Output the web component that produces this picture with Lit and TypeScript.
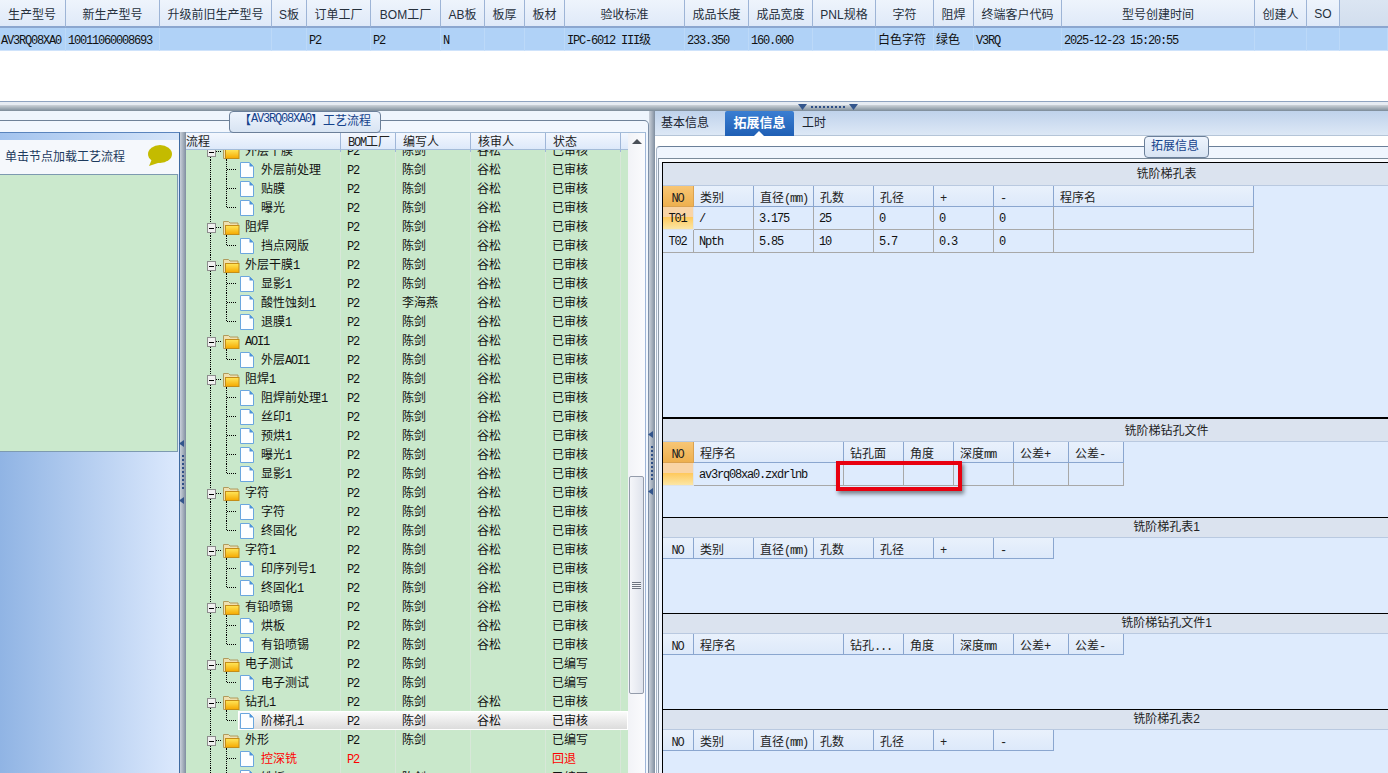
import { LitElement, html, css, svg } from "lit";
import { customElement } from "lit/decorators.js";

const mono = (s: string) =>
  s.split(/([\x20-\x7e]+)/).map((p, i) => (i % 2 ? html`<span class="m">${p}</span>` : p));

const topCols = [67, 94, 112, 35, 64, 70, 44, 40, 40, 120, 64, 64, 63, 58, 40, 88, 193, 52, 33];
const topHead = ["生产型号", "新生产型号", "升级前旧生产型号", "S板", "订单工厂", "BOM工厂", "AB板", "板厚", "板材", "验收标准", "成品长度", "成品宽度", "PNL规格", "字符", "阻焊", "终端客户代码", "型号创建时间", "创建人", "SO"];
const topRow = ["AV3RQ08XA0", "10011060008693", "", "", "P2", "P2", "N", "", "", "IPC-6012 III级", "233.350", "160.000", "", "白色字符", "绿色", "V3RQ", "2025-12-23 15:20:55", "", ""];

type Row = { n: string; f?: boolean; last?: boolean; who?: string; rev?: string; st?: string; fac?: string; red?: boolean; sel?: boolean };
const rows: Row[] = [
  { n: "外层干膜", f: true },
  { n: "外层前处理" }, { n: "贴膜" }, { n: "曝光", last: true },
  { n: "阻焊", f: true }, { n: "挡点网版", last: true },
  { n: "外层干膜1", f: true }, { n: "显影1" }, { n: "酸性蚀刻1", who: "李海燕" }, { n: "退膜1", last: true },
  { n: "AOI1", f: true }, { n: "外层AOI1", last: true },
  { n: "阻焊1", f: true }, { n: "阻焊前处理1" }, { n: "丝印1" }, { n: "预烘1" }, { n: "曝光1" }, { n: "显影1", last: true },
  { n: "字符", f: true }, { n: "字符" }, { n: "终固化", last: true },
  { n: "字符1", f: true }, { n: "印序列号1" }, { n: "终固化1", last: true },
  { n: "有铅喷锡", f: true }, { n: "烘板" }, { n: "有铅喷锡", last: true },
  { n: "电子测试", f: true, rev: "", st: "已编写" }, { n: "电子测试", last: true, rev: "", st: "已编写" },
  { n: "钻孔1", f: true }, { n: "阶梯孔1", last: true, sel: true },
  { n: "外形", f: true, rev: "", st: "已编写" },
  { n: "控深铣", red: true, who: "", rev: "", st: "回退" },
  { n: "铣板", fac: "", rev: "", st: "已编写" },
];

const holeCols = [31, 60, 60, 60, 60, 60, 60];
const holeHead = ["NO", "类别", "直径(mm)", "孔数", "孔径", "+", "-"];
const fileCols = [31, 150, 60, 50, 60, 55, 55];
type Sec = { title: string; h: number; band: number; lh: number; thick?: boolean; cols: number[]; head: string[]; rows?: string[][]; hot?: boolean; mark?: boolean };
const secs: Sec[] = [
  { title: "铣阶梯孔表", h: 255, band: 23, lh: 23, cols: [...holeCols, 200], head: [...holeHead, "程序名"], hot: true,
    rows: [["T01", "/", "3.175", "25", "0", "0", "0", ""], ["T02", "Npth", "5.85", "10", "5.7", "0.3", "0", ""]] },
  { title: "铣阶梯钻孔文件", h: 100, band: 23, lh: 25, thick: true, cols: fileCols, head: ["NO", "程序名", "钻孔面", "角度", "深度mm", "公差+", "公差-"], hot: true, mark: true,
    rows: [["", "av3rq08xa0.zxdrlnb", "", "", "", "", ""]] },
  { title: "铣阶梯孔表1", h: 96, band: 20, lh: 19, cols: holeCols, head: holeHead },
  { title: "铣阶梯钻孔文件1", h: 96, band: 20, lh: 19, cols: fileCols, head: ["NO", "程序名", "钻孔...", "角度", "深度mm", "公差+", "公差-"] },
  { title: "铣阶梯孔表2", h: 70, band: 20, lh: 19, cols: holeCols, head: holeHead },
];

const tri = (dir: string) => svg`<svg class="tri" width="9" height="7" viewBox="0 0 9 7"><path d="${dir}" fill="#33558c"/></svg>`;

@customElement("app-root")
export class AppRoot extends LitElement {
  static styles = css`
    :host { display: block; width: 1388px; height: 773px; overflow: hidden; background: #fff; font: 12px "Liberation Sans", "Noto Sans CJK SC", sans-serif; color: #111; }
    * { box-sizing: border-box; }
    .m { font-family: "Liberation Mono", monospace; font-size: 12px; letter-spacing: -1.2px; }
    .top { height: 101px; }
    .grid { display: grid; margin-left: -1px; width: 1389px; }
    .th { height: 28px; display: flex; align-items: center; justify-content: center; background: linear-gradient(#eef4fc, #dfe9f8); border-right: 1px solid #9db4d6; border-bottom: 2px solid #8ba6cf; color: #26303c; padding-top: 1px; white-space: nowrap; }
    .th.fill { background: linear-gradient(#dbe5f2, #d2deee); border-right: 0; }
    .td { height: 23px; line-height: 24px; padding-left: 2px; background: #b0d2f7; border-right: 1px solid #bcd9f8; border-bottom: 1px solid #cfe3fb; white-space: nowrap; overflow: hidden; }
    .td:first-of-type { padding-left: 1px; }
    .hsplit { position: relative; height: 10px; border-top: 1px solid #8fa3c0; background: linear-gradient(#e6ebf2 0 3px, #cdd3d9 3px, #7c8b99 100%); }
    .hgrip { position: absolute; left: 798px; top: 2px; width: 60px; height: 6px; display: flex; justify-content: space-between; align-items: center; }
    .dots-h { width: 34px; height: 2px; background: repeating-linear-gradient(90deg, #2f4f86 0 2px, transparent 2px 4px); }
    .main { display: flex; height: 662px; }
    .lgroup { position: relative; width: 649px; padding-top: 9px; background: #eef5fd; flex: none; }
    .lframe { display: flex; height: 653px; padding-top: 11px; border-top: 1px solid #6f8299; border-right: 1px solid #7e90a8; border-top-right-radius: 5px; background: #f2f7fe; }
    .legend { position: absolute; display: flex; align-items: center; justify-content: center; height: 22px; border: 1px solid #6b7f99; border-radius: 4px; background: linear-gradient(#eef4fd, #d8e4f3); color: #15428b; white-space: nowrap; }
    .l1 { left: 229px; top: 0; width: 152px; padding-bottom: 6px; }
    .l2 { left: 489px; top: 25px; width: 65px; padding: 0 3px 5px 0; }
    .lpane { width: 180px; flex: none; border-top: 1px solid #5a84bd; border-right: 1px solid #3f6aa0; background: linear-gradient(90deg, #90b4e4, #dce9fd); }
    .lstrip { height: 7px; background: linear-gradient(90deg, #a3c3ee, #d6e5f9); }
    .lhead { height: 34px; padding: 0 6px 3px 5px; display: flex; align-items: center; justify-content: space-between; background: #f5f8fc; color: #1d3a5e; }
    .lgreen { height: 278px; margin-right: 1px; background: #cbe9cd; border: 1px solid #7d9ab0; border-left: 0; }
    .vsplit { position: relative; width: 6px; flex: none; background: linear-gradient(90deg, #c9d0da, #a6b0bd 50%, #7f8ea0); }
    .vgrip { position: absolute; left: 0; display: flex; flex-direction: column; align-items: center; justify-content: space-between; width: 100%; height: 64px; }
    .vgrip.a { top: 308px; }
    .vgrip.b { top: 320px; }
    .dots-v { width: 2px; height: 34px; background: repeating-linear-gradient(#2f4f86 0 2px, transparent 2px 4px); }
    .tree { display: flex; width: 460px; flex: none; height: 100%; border-top: 1px solid #a4bcd8; border-right: 1px solid #9fb6d8; overflow: hidden; }
    .tmain { width: 442px; flex: none; display: flex; flex-direction: column; }
    .thead { display: grid; grid-template-columns: 155px 55px 75px 75px 75px 7px; height: 17px; flex: none; background: linear-gradient(#f3f7fe, #dde9fa); border-bottom: 1px solid #a4bcd8; position: relative; z-index: 1; }
    .thead div { line-height: 18px; padding-left: 7px; border-right: 1px solid #9fb6d8; white-space: nowrap; color: #222; }
    .thead div:first-child { padding-left: 0; }
    .thead div:last-child { border-right: 0; padding: 0; }
    .tbody { flex: 1; overflow: hidden; background: #c9e8cb; }
    .trows { margin-top: -9px; }
    .row { display: grid; grid-template-columns: 155px 55px 75px 75px 75px 7px; height: 19px; line-height: 21px; white-space: nowrap; position: relative; }
    .row > div { padding-left: 6px; border-right: 1px solid #d8e7d9; }
    .row > div:first-child { display: flex; padding-left: 0; }
    .row > div:last-child { border-right: 0; padding: 0; }
    .row.red { color: #f00; }
    .row.sel::before { content: ""; position: absolute; left: 52px; right: 0; top: 0; bottom: 0; background: linear-gradient(#fbfbfb, #dcdcdc); border: 1px solid #fff; }
    .row.sel > div { position: relative; border-right-color: transparent; }
    .gut { flex: none; display: block; margin-right: 3px; }
    .scroll { width: 17px; flex: none; display: flex; flex-direction: column; align-items: center; padding-top: 6px; background: linear-gradient(90deg, #f2f3f7, #fbfbfd); }
    .up { width: 0; height: 0; border: 5px solid transparent; border-top: 0; border-bottom-color: #4a4f57; }
    .thumb { width: 15px; height: 218px; margin-top: 332px; flex: none; display: flex; align-items: center; justify-content: center; border: 1px solid #949cab; border-radius: 2px; background: linear-gradient(90deg, #f5f6fa, #dfe3ec); }
    .grip { width: 9px; height: 7px; background: repeating-linear-gradient(#6e7480 0 1px, #f4f5f8 1px 2px); }
    .right { flex: 1; min-width: 0; overflow: hidden; position: relative; background: #fff; }
    .tabs { height: 25px; display: flex; padding-left: 6px; gap: 0; background: linear-gradient(#bfd2eb, #dde8f6); border-bottom: 1px solid #b5c5d8; }
    .tab { height: 25px; line-height: 24px; padding: 0 7px 0 0; color: #1a2430; white-space: nowrap; }
    .tab.b { width: 64px; }
    .tab.w { margin-left: 8px; }
    .tab.on { position: relative; width: 69px; padding: 0; text-align: center; font-size: 13px; color: #fff; font-weight: 700; background: linear-gradient(#3a7ed2, #1f5fb5); border-radius: 2px 2px 0 0; }
    .tab.on::after { content: ""; position: absolute; left: 29px; bottom: 0; border: 5px solid transparent; border-top: 0; border-bottom-color: #fff; }
    .gap { height: 10px; background: #fff; }
    .rframe { height: 627px; border-top: 1px solid #6a7f99; border-left: 1px solid #a9b6c8; background: #eff5fe; margin-left: 1px; border-top-left-radius: 4px; padding: 11px 0 0 1px; }
    .rinner { height: 100%; width: 1020px; border-top: 1px solid #7a8a9a; border-left: 1px solid #8e9aa8; padding: 3px 0 0 3px; background: linear-gradient(#f8fbff 0 3px, #eff5fe 3px); }
    .sec { position: relative; width: 1008px; border-top: 1px solid #000; border-left: 1px solid #000; background: #deebfd; }
    .sec.thick { border-top-width: 2px; }
    .band { background: #dbe3ef; text-align: center; color: #222; border-bottom: 1px solid #b9c9e0; }
    .tbl { display: grid; justify-content: start; }
    .hc { height: 21px; line-height: 24px; padding-left: 6px; white-space: nowrap; background: linear-gradient(#e9f1fc, #dde9fa); border-right: 1px solid #8aa6cf; border-bottom: 1px solid #8aa6cf; color: #222; }
    .hc.no { padding: 0 1px 0 0; text-align: center; }
    .hc.no.hot { background: linear-gradient(#f8c675, #eeb04f); border-color: #dba250; }
    .dc { height: 23px; line-height: 23px; padding-left: 5px; white-space: nowrap; border-right: 1px solid #a8a8a8; border-bottom: 1px solid #a8a8a8; }
    .dc.no { padding: 0 1px 0 0; text-align: center; }
    .dc.hot { background: linear-gradient(#f9d4a6 0 45%, #ffc85a 45%, #fbe6a5); border-color: #dde3ea; }
    .mark { position: absolute; left: 173px; top: 42px; width: 126px; height: 30px; border: 4px solid #e8000f; box-shadow: 2px 3px 4px rgba(0, 0, 0, 0.45); }
  `;

  private gutter(r: Row) {
    const dash = "1 1";
    if (r.f) {
      return html`<svg class="gut" width="56" height="19" viewBox="0 0 56 19" shape-rendering="crispEdges">
        <path d="M24.5 0V6M24.5 16V19" stroke="#000" stroke-dasharray="${dash}"/>
        <path d="M30 10.5H36" stroke="#000" stroke-dasharray="${dash}"/>
        <path d="M40.5 18V19" stroke="#000" stroke-dasharray="${dash}"/>
        <rect x="21.5" y="6.5" width="8" height="9" fill="#f0f0f0" stroke="#8d8d8d"/>
        <path d="M23 11H28" stroke="#000" fill="none"/>
        <g shape-rendering="geometricPrecision">
          <path d="M37.5 17.5V4.5h5l1.5 1.5h8v11.5z" fill="#efe0b0" stroke="#b09a5c"/>
          <defs><linearGradient id="fy" x1="0" y1="0" x2="0" y2="1"><stop offset="0" stop-color="#ffe75a"/><stop offset="1" stop-color="#f5a800"/></linearGradient></defs>
          <rect x="39.5" y="8.5" width="13.5" height="9" fill="url(#fy)" stroke="#c48d18"/>
        </g>
      </svg>`;
    }
    return html`<svg class="gut" width="72" height="19" viewBox="0 0 72 19" shape-rendering="crispEdges">
      <path d="M24.5 0V19" stroke="#000" stroke-dasharray="${dash}"/>
      <path d="M40.5 0V${r.last ? 10 : 19}M41 9.5H51" stroke="#000" stroke-dasharray="${dash}"/>
      <g shape-rendering="geometricPrecision">
        <path d="M54.5 2.5h9l4 4v11h-13z" fill="#fdfeff" stroke="#6aa6de"/>
        <path d="M63.5 2.5v4h4z" fill="#4f93da"/>
      </g>
    </svg>`;
  }

  private treeRow(r: Row) {
    const who = r.who ?? "陈剑";
    const rev = r.rev ?? "谷松";
    const st = r.st ?? "已审核";
    const fac = r.fac ?? "P2";
    return html`<div class="row ${r.red ? "red" : ""} ${r.sel ? "sel" : ""}">
      <div>${this.gutter(r)}<span>${mono(r.n)}</span></div>
      <div>${mono(fac)}</div><div>${who}</div><div>${rev}</div><div>${st}</div><div></div>
    </div>`;
  }

  private section(s: Sec) {
    const cols = s.cols.map((c) => c + "px").join(" ");
    return html`<div class="sec ${s.thick ? "thick" : ""}" style="height:${s.h}px">
      <div class="band" style="height:${s.band}px;line-height:${s.lh}px">${s.title}</div>
      <div class="tbl" style="grid-template-columns:${cols}">
        ${s.head.map((h, i) => html`<div class="hc ${i === 0 ? "no" : ""} ${i === 0 && s.hot ? "hot" : ""}">${mono(h)}</div>`)}
        ${(s.rows ?? []).map((row, ri) =>
          row.map((c, i) => html`<div class="dc ${i === 0 ? "no" : ""} ${i === 0 && ri === 0 && s.hot ? "hot" : ""}">${mono(c)}</div>`)
        )}
      </div>
      ${s.mark ? html`<div class="mark"></div>` : ""}
    </div>`;
  }

  render() {
    const tc = topCols.map((c) => c + "px").join(" ") + " 1fr";
    return html`
      <div class="top">
        <div class="grid" style="grid-template-columns:${tc}">
          ${topHead.map((h) => html`<div class="th">${h}</div>`)}<div class="th fill"></div>
          ${topRow.map((c) => html`<div class="td">${mono(c)}</div>`)}<div class="td"></div>
        </div>
      </div>
      <div class="hsplit">
        <div class="hgrip">
          ${tri("M0 0H9L4.5 6z")}<div class="dots-h"></div>${tri("M0 0H9L4.5 6z")}
        </div>
      </div>
      <div class="main">
        <div class="lgroup">
          <div class="lframe">
            <div class="lpane">
              <div class="lstrip"></div>
              <div class="lhead">
                <span>单击节点加载工艺流程</span>
                <svg width="26" height="21" viewBox="0 0 26 21"><ellipse cx="13" cy="9" rx="12" ry="9" fill="#c4bb00"/><path d="M5 14L2 21L14 17z" fill="#c4bb00"/></svg>
              </div>
              <div class="lgreen"></div>
            </div>
            <div class="vsplit">
              <div class="vgrip a">
                ${tri("M5 0V7L0 3.5z")}<div class="dots-v"></div>${tri("M5 0V7L0 3.5z")}
              </div>
            </div>
            <div class="tree">
              <div class="tmain">
                <div class="thead">
                  <div>流程</div><div>${mono("BOM")}工厂</div><div>编写人</div><div>核审人</div><div>状态</div><div></div>
                </div>
                <div class="tbody"><div class="trows">${rows.map((r) => this.treeRow(r))}</div></div>
              </div>
              <div class="scroll">
                <div class="up"></div>
                <div class="thumb"><div class="grip"></div></div>
              </div>
            </div>
          </div>
          <div class="legend l1">【${mono("AV3RQ08XA0")}】工艺流程</div>
        </div>
        <div class="vsplit">
          <div class="vgrip b">
            ${tri("M5 0V7L0 3.5z")}<div class="dots-v"></div>${tri("M5 0V7L0 3.5z")}
          </div>
        </div>
        <div class="right">
          <div class="tabs">
            <div class="tab b">基本信息</div>
            <div class="tab on">拓展信息</div>
            <div class="tab w">工时</div>
          </div>
          <div class="gap"></div>
          <div class="rframe">
            <div class="rinner">${secs.map((s) => this.section(s))}</div>
          </div>
          <div class="legend l2">拓展信息</div>
        </div>
      </div>
    `;
  }
}
